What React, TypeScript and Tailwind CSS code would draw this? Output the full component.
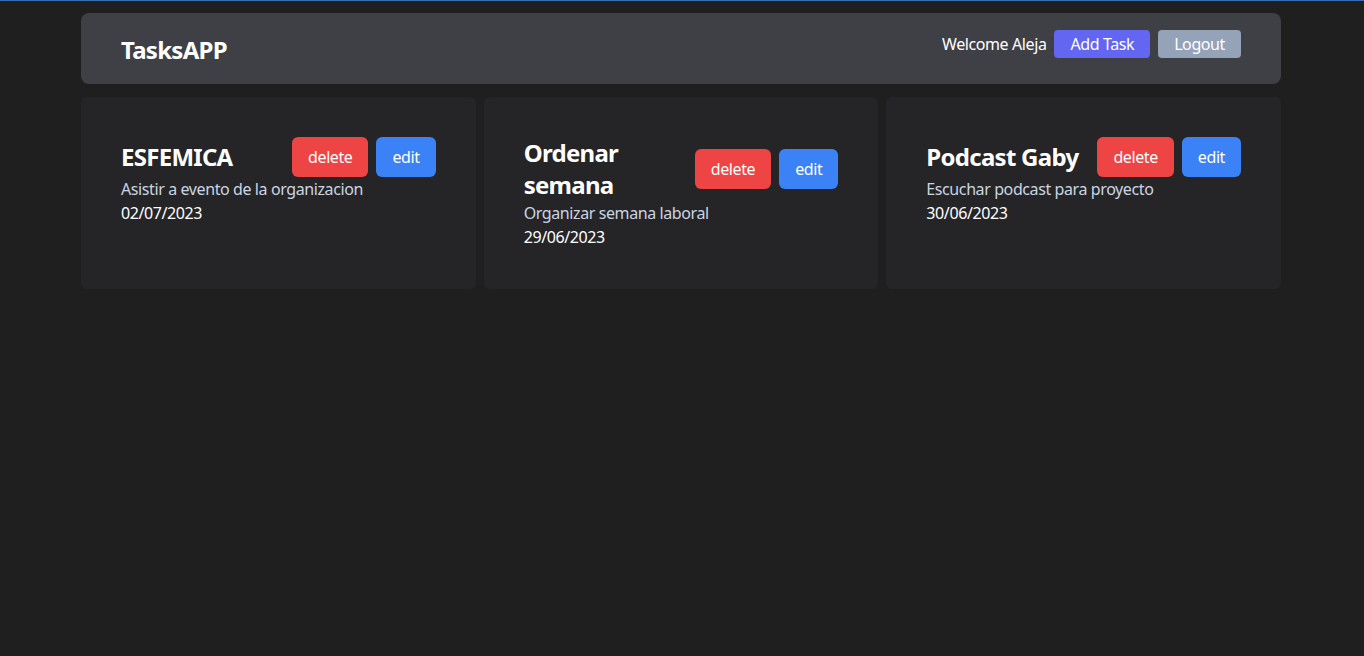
import React from "react";

const tasks = [
  {
    id: 1,
    title: "ESFEMICA",
    description: "Asistir a evento de la organizacion",
    date: "02/07/2023",
  },
  {
    id: 2,
    title: "Ordenar semana",
    description: "Organizar semana laboral",
    date: "29/06/2023",
  },
  {
    id: 3,
    title: "Podcast Gaby",
    description: "Escuchar podcast para proyecto",
    date: "30/06/2023",
  },
];

function Navbar() {
  return (
    <header className="flex justify-between h-[71px] px-10 bg-[#3f3f46] rounded-lg">
      <h1 className="pt-[21px] text-2xl font-bold text-white tracking-[-0.03em]">
        TasksAPP
      </h1>
      <div className="flex items-center gap-2 pt-[17px] self-start">
        <span className="text-white">Welcome Aleja</span>
        <button className="px-4 h-7 bg-[#6366f1] text-white rounded-sm">
          Add Task
        </button>
        <button className="px-4 h-7 bg-[#94a3b8] text-white rounded-sm">
          Logout
        </button>
      </div>
    </header>
  );
}

function TaskCard({ task }: { task: (typeof tasks)[number] }) {
  return (
    <div className="bg-[#252528] p-10 rounded-md">
      <div className="flex justify-between items-center gap-3">
        <h2 className="text-2xl font-bold text-white tracking-[-0.03em] leading-8">
          {task.title}
        </h2>
        <div className="flex gap-2 shrink-0">
          <button className="bg-[#ef4444] text-white px-4 py-2 rounded-md">
            delete
          </button>
          <button className="bg-[#3b82f6] text-white px-4 py-2 rounded-md">
            edit
          </button>
        </div>
      </div>
      <p className="text-[#cbd5e1]">{task.description}</p>
      <p className="text-white">{task.date}</p>
    </div>
  );
}

export default function App() {
  return (
    <div
      className="min-h-[656px] bg-[#1f1f1f] border-t border-[#3b6fb5] tracking-[-0.025em] pl-[81px] pr-[83px]"
      style={{ fontFamily: '"Noto Sans", sans-serif' }}
    >
      <div className="pt-3">
        <Navbar />
        <div className="grid grid-cols-3 gap-2 mt-[13px]">
          {tasks.map((task) => (
            <TaskCard key={task.id} task={task} />
          ))}
        </div>
      </div>
    </div>
  );
}
